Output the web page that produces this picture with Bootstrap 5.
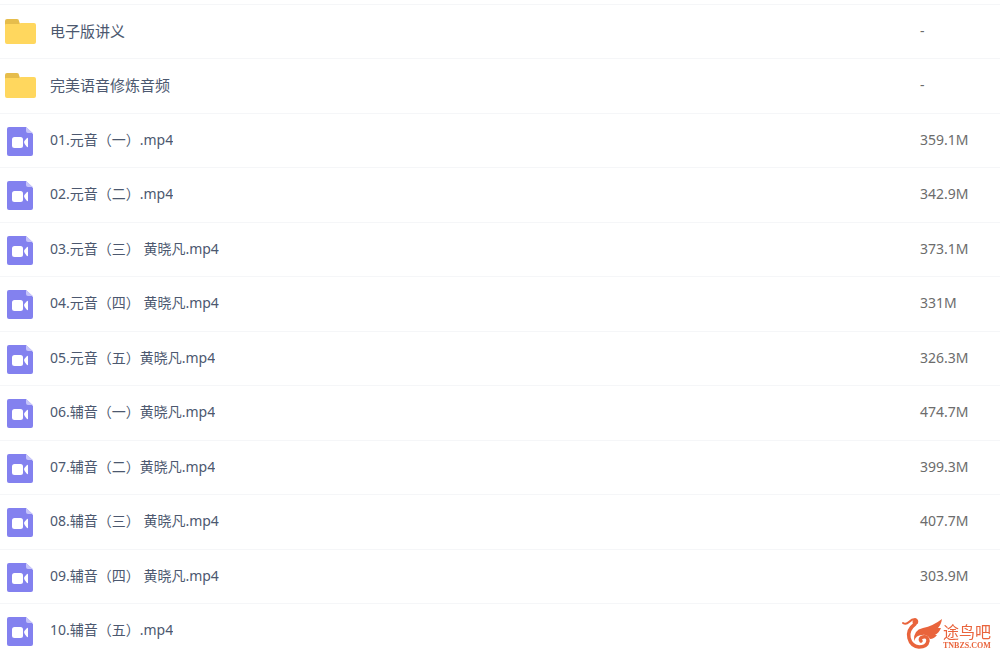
<!DOCTYPE html>
<html lang="zh-CN">
<head>
<meta charset="utf-8">
<meta name="viewport" content="width=device-width, initial-scale=1">
<title>文件列表</title>
<link rel="stylesheet" href="https://cdn.jsdelivr.net/npm/bootstrap@5.3.0/dist/css/bootstrap.min.css">
<style>
body { font-family: "Noto Sans", "Noto Sans CJK SC", sans-serif; font-size: 14px; line-height: 20px; background: #fff; }
.files { table-layout: fixed; border-top: 1px solid #f5f6f8; --bs-table-bg: transparent; }
.files tr { height: 54px; }
.files tr:nth-child(even) { height: 55px; }
.files td { border-bottom: 1px solid #f5f6f8; padding: 0 0 2px; }
.files .size-col { width: 80px; color: #6c6c6c; }
.files a { color: #4c586f; }
.files .folder-name { font-size: 15px; line-height: 18px; }
.file-entry { gap: 13px; padding-left: 5px; }
.file-icon { width: 32px; height: 32px; margin-top: 4px; flex: none; }
.brand-mark { color: #e9643c; right: 9px; bottom: 4px; }
.brand-cn { font: 16px/18px "Liberation Sans", "Noto Sans CJK SC", sans-serif; }
.brand-url { font: bold 8px/8px "Liberation Serif", serif; }
</style>
</head>
<body class="vh-100 overflow-hidden pt-1">
<svg class="d-none" aria-hidden="true">
  <symbol id="folder" viewBox="0 0 32 32">
    <path fill="#e6bd4c" d="M0 11V4q0-2 2-2h10q2 0 2 2l1 3v4z"/>
    <path fill="#ffd75e" d="M0 8q0-1 1-1h13q1-1 2-1h13q2 0 2 2v17q0 2-2 2H2q-2 0-2-2z"/>
  </symbol>
  <symbol id="video" viewBox="0 0 32 32">
    <path fill="#8381ef" d="M4 1h17l7 7v20q0 2-2 2H4q-2 0-2-2V3q0-2 2-2z"/>
    <path fill="#c6c4fa" d="M21 1l7 6h-5q-2 0-2-2z"/>
    <rect x="7" y="11" width="11" height="11" rx="2.5" fill="#fff"/>
    <path fill="#fff" d="M19 16q0-1 3-4 1-.5 1 .5v8q0 1-1 .5-3-3-3-5z"/>
  </symbol>
</svg>
<main>
<table class="files table table-borderless mb-0 align-middle">
<tbody id="rows"></tbody>
</table>
</main>
<div class="brand-mark position-fixed d-flex align-items-end">
  <svg width="41" height="33" viewBox="0 0 41 33" aria-hidden="true">
    <g fill="none" stroke="#e9643c" stroke-linecap="round">
      <path stroke-width="2" d="M1 6q3 2 6-1 3-3 6-3 3 1 2 4"/>
      <path stroke-width="3.5" d="M13 7Q5 13 7 21q2 8 10 9 8 0 9-6 0-5-5-4-4 1-2 4"/>
    </g>
    <circle cx="13" cy="5" r="2.5" fill="#e9643c"/>
    <path fill="#e9643c" d="M12 24Q11 13 21 11q10-2 19-9-1 6-4 9h3q-2 5-6 7h2q-3 4-7 4-3-5-8-4-6 0-8 6z"/>
  </svg>
  <div>
    <div class="brand-cn">途鸟吧</div>
    <div class="brand-url">TNBZS.COM</div>
  </div>
</div>
<script>
const files = [
  ["电子版讲义", "-"],
  ["完美语音修炼音频", "-"],
  ["01.元音（一）.mp4", "359.1M"],
  ["02.元音（二）.mp4", "342.9M"],
  ["03.元音（三） 黄晓凡.mp4", "373.1M"],
  ["04.元音（四） 黄晓凡.mp4", "331M"],
  ["05.元音（五）黄晓凡.mp4", "326.3M"],
  ["06.辅音（一）黄晓凡.mp4", "474.7M"],
  ["07.辅音（二）黄晓凡.mp4", "399.3M"],
  ["08.辅音（三） 黄晓凡.mp4", "407.7M"],
  ["09.辅音（四） 黄晓凡.mp4", "303.9M"],
  ["10.辅音（五）.mp4", ""]
];
document.getElementById("rows").innerHTML = files.map(([name, size]) => {
  const folder = !name.endsWith(".mp4");
  return `<tr><td><div class="file-entry d-flex align-items-center">
    <svg class="file-icon" aria-hidden="true"><use href="#${folder ? "folder" : "video"}"/></svg>
    <a href="#" class="text-decoration-none text-truncate${folder ? " folder-name" : ""}">${name}</a>
  </div></td><td class="size-col">${size}</td></tr>`;
}).join("");
</script>
<script src="https://cdn.jsdelivr.net/npm/bootstrap@5.3.0/dist/js/bootstrap.bundle.min.js"></script>
</body>
</html>
